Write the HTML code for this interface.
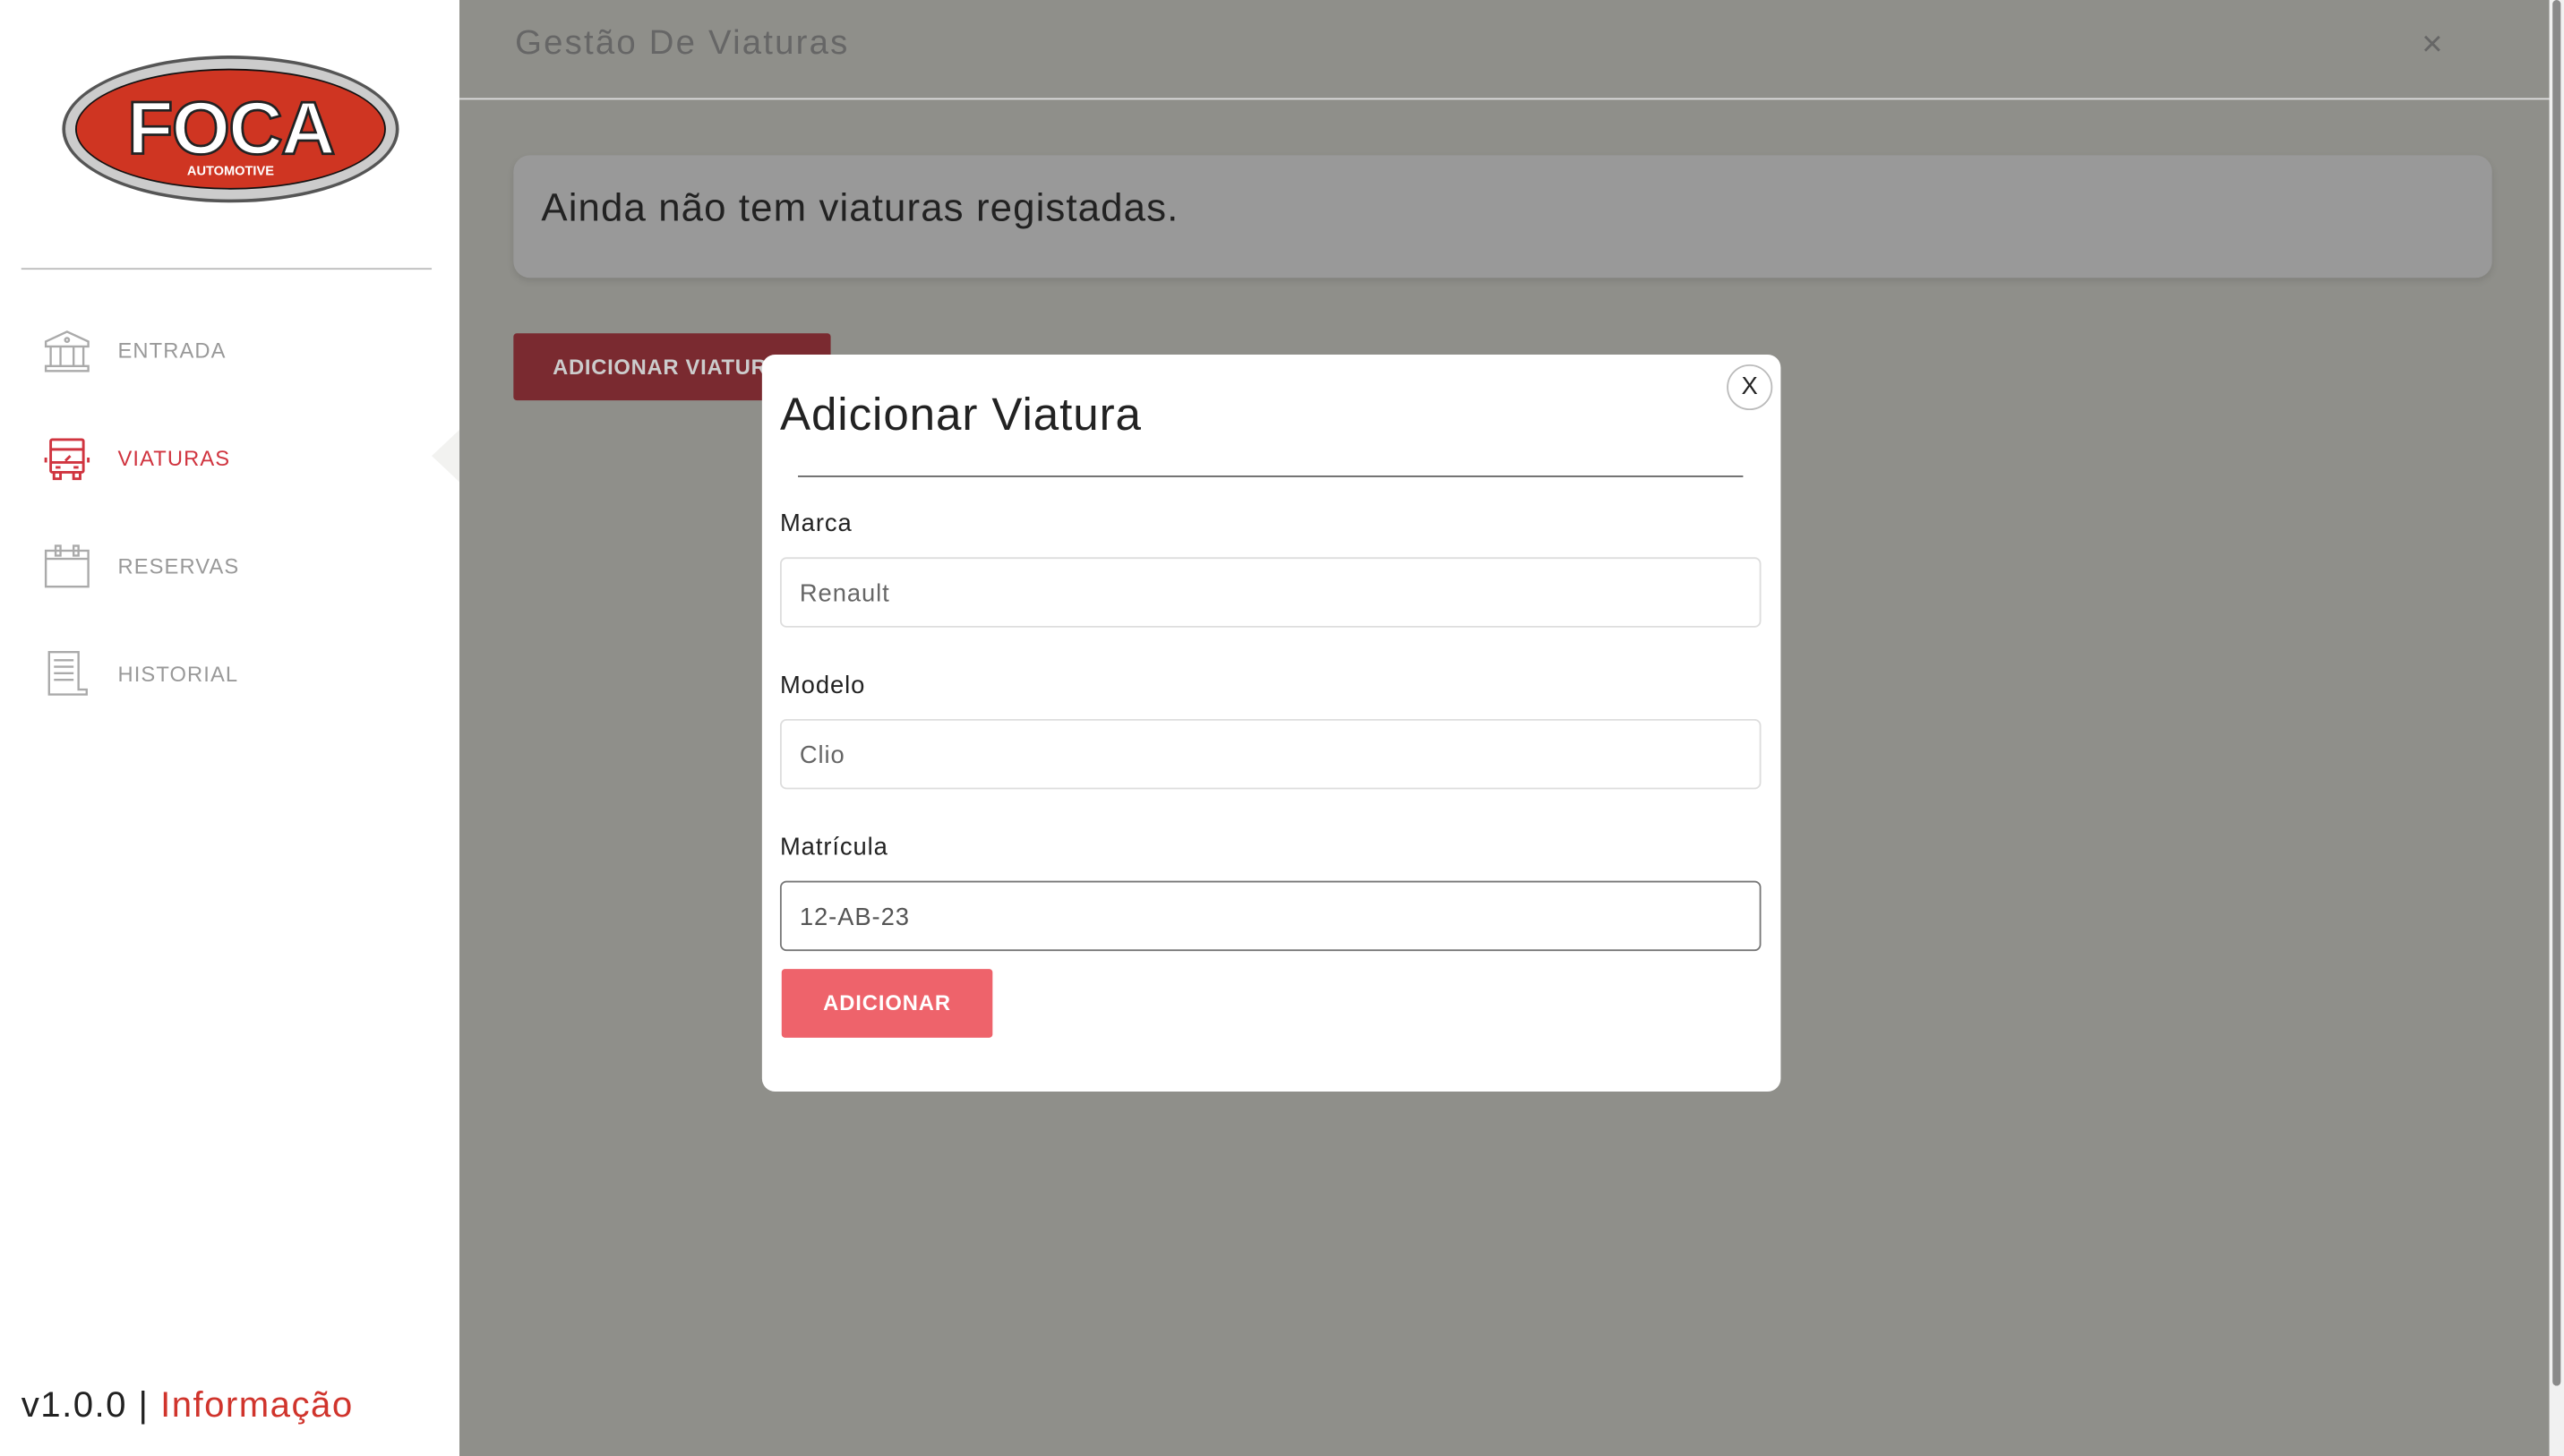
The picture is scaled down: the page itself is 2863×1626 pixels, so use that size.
<!DOCTYPE html>
<html><head><meta charset="utf-8"><style>
html,body{margin:0;padding:0;width:2863px;height:1626px;overflow:hidden;background:#8f8f8a}
#w{position:absolute;left:0;top:0;width:1568px;height:891px;transform:scale(1.82589,1.82492);transform-origin:0 0;font-family:"Liberation Sans",sans-serif}
.sb{position:absolute;left:0;top:0;width:281px;height:891px;background:#fff}
.main{position:absolute;left:281px;top:0;width:1278px;height:891px;background:#8f8f8a}
.scroll{position:absolute;left:1559px;top:0;width:9px;height:891px;background:#f1f1f1}
.scroll div{position:absolute;left:2px;top:0;width:5px;height:848px;background:#8a8a8a;border-radius:3px}
.nav{position:absolute;left:72px;font-size:13px;color:#999;letter-spacing:.6px}
.ic{position:absolute;left:27px}
.lab{position:absolute;left:11px;font-size:15px;color:#222;letter-spacing:.5px}
.inp{position:absolute;left:11px;width:600px;height:43px;box-sizing:border-box;border:1px solid #ddd;border-radius:4px;padding-left:11px;line-height:43px;font-size:15px;color:#666;letter-spacing:.5px}
</style></head><body><div id="w">
<div class="sb">
 <svg style="position:absolute;left:36px;top:32px" width="210" height="95" viewBox="0 0 210 95">
  <ellipse cx="105" cy="47" rx="103" ry="45" fill="#555"/>
  <ellipse cx="105" cy="47" rx="101" ry="43" fill="#ccc"/>
  <ellipse cx="105" cy="47" rx="95" ry="37" fill="#111"/>
  <ellipse cx="105" cy="47" rx="94" ry="36" fill="#cf3522"/>
  <text x="105" y="62" text-anchor="middle" font-family="Liberation Sans" font-weight="bold" font-size="46" fill="#fff" stroke="#222" stroke-width="1.5" letter-spacing="-1">FOCA</text>
  <text x="105" y="75" text-anchor="middle" font-family="Liberation Sans" font-weight="bold" font-size="8" fill="#fff">AUTOMOTIVE</text>
 </svg>
 <div style="position:absolute;left:13px;top:164px;width:251px;height:1px;background:#bbb"></div>
 <svg class="ic" style="top:202px" width="28" height="26" viewBox="0 0 28 26" fill="none" stroke="#aaa" stroke-width="1.3"><path d="M1 7 L14 1 L27 7 V10 H1Z"/><circle cx="14" cy="6" r="1.2"/><path d="M4 10V22M10 10V22M18 10V22M24 10V22M1 22H27V25H1Z"/></svg>
 <div class="nav" style="top:207px">ENTRADA</div>
 <svg class="ic" style="top:268px" width="28" height="26" viewBox="0 0 28 26" fill="none" stroke="#d0343f" stroke-width="1.6"><rect x="4" y="1" width="20" height="20" rx="1"/><path d="M4 7H24M4 15H24M7 18H10M18 18H21M6 21V25H10V21M18 21V25H22V21M1 12V15M27 12V15M13 14L16 11"/></svg>
 <div class="nav" style="top:273px;color:#d0343f">VIATURAS</div>
 <svg style="position:absolute;left:264px;top:263px" width="17" height="32"><path d="M17 0 L0 16 L17 32Z" fill="#f2f2f0"/></svg>
 <svg class="ic" style="top:333px" width="28" height="27" viewBox="0 0 28 27" fill="none" stroke="#aaa" stroke-width="1.3"><rect x="1" y="4" width="26" height="22"/><path d="M1 9H27"/><rect x="7" y="1" width="3" height="6"/><rect x="18" y="1" width="3" height="6"/></svg>
 <div class="nav" style="top:339px">RESERVAS</div>
 <svg class="ic" style="top:398px" width="28" height="28" viewBox="0 0 28 28" fill="none" stroke="#aaa" stroke-width="1.3"><path d="M3 1H21V24H26V27H3Z"/><path d="M6 6H18M6 10H18M6 14H18M6 18H18"/></svg>
 <div class="nav" style="top:405px">HISTORIAL</div>
 <div style="position:absolute;left:13px;top:847px;font-size:22px;color:#222;letter-spacing:.8px">v1.0.0 | <span style="color:#d0342c">Informação</span></div>
</div>
<div class="main">
 <div style="position:absolute;left:34px;top:15px;font-size:21px;color:#666;letter-spacing:1.2px">Gestão De Viaturas</div>
 <div style="position:absolute;left:1200px;top:14px;font-size:22px;color:#666">×</div>
 <div style="position:absolute;left:0;top:60px;width:1278px;height:1px;background:#ddd"></div>
 <div style="position:absolute;left:33px;top:95px;width:1210px;height:75px;background:#999;border-radius:10px;box-shadow:0 2px 4px rgba(0,0,0,.1)"></div>
 <div style="position:absolute;left:50px;top:114px;font-size:24px;color:#222;letter-spacing:.6px">Ainda não tem viaturas registadas.</div>
 <div style="position:absolute;left:33px;top:204px;width:194px;height:41px;background:#7a2a30;border-radius:2px;color:#ccc;font-weight:bold;font-size:13px;line-height:41px;padding-left:24px;box-sizing:border-box;white-space:nowrap;overflow:hidden;letter-spacing:.4px">ADICIONAR VIATURA</div>
</div>
<div style="position:absolute;left:466px;top:217px;width:623px;height:451px;background:#fff;border-radius:8px">
 <div style="position:absolute;left:590px;top:6px;width:26px;height:26px;border:1px solid #bbb;border-radius:50%;text-align:center;line-height:26px;font-size:15px;color:#222">X</div>
 <div style="position:absolute;left:11px;top:21px;font-size:28px;color:#222;letter-spacing:.5px">Adicionar Viatura</div>
 <div style="position:absolute;left:22px;top:74px;width:578px;height:1px;background:#666"></div>
 <div class="lab" style="top:95px">Marca</div>
 <div class="inp" style="top:124px">Renault</div>
 <div class="lab" style="top:194px">Modelo</div>
 <div class="inp" style="top:223px">Clio</div>
 <div class="lab" style="top:293px">Matrícula</div>
 <div class="inp" style="top:322px;border-color:#777;color:#555">12-AB-23</div>
 <div style="position:absolute;left:12px;top:376px;width:129px;height:42px;background:#ee636b;border-radius:2px;color:#fff;font-weight:bold;font-size:13px;line-height:42px;text-align:center;letter-spacing:.5px">ADICIONAR</div>
</div>
<div class="scroll"><div></div></div>
</div></body></html>
